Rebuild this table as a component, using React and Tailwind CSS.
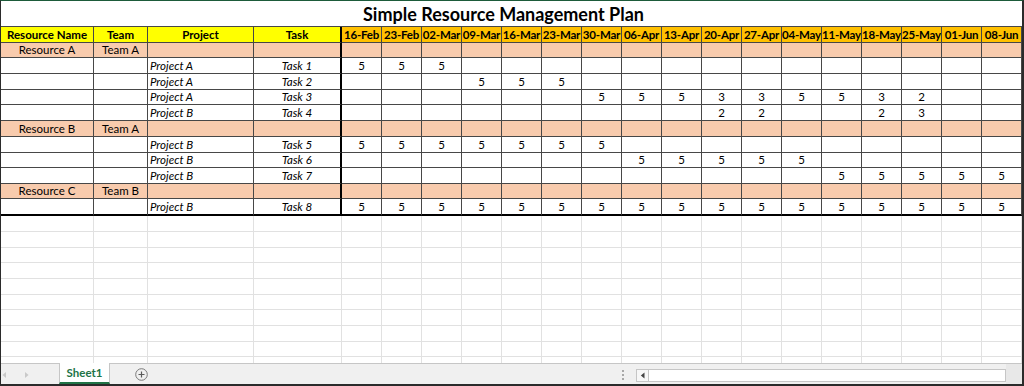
import React from "react";

const DATES = [
  "16-Feb", "23-Feb", "02-Mar", "09-Mar", "16-Mar", "23-Mar", "30-Mar", "06-Apr", "13-Apr",
  "20-Apr", "27-Apr", "04-May", "11-May", "18-May", "25-May", "01-Jun", "08-Jun",
];

// row kind: "group" = peach resource row, "task" = plain row with hours per week
const ROWS = [
  { kind: "group", name: "Resource A", team: "Team A", h: "h-[15px]" },
  { kind: "task", project: "Project A", task: "Task 1", hours: { 0: 5, 1: 5, 2: 5 }, h: "h-[16px]" },
  { kind: "task", project: "Project A", task: "Task 2", hours: { 3: 5, 4: 5, 5: 5 }, h: "h-[16px]" },
  { kind: "task", project: "Project A", task: "Task 3", hours: { 6: 5, 7: 5, 8: 5, 9: 3, 10: 3, 11: 5, 12: 5, 13: 3, 14: 2 }, h: "h-[15px]" },
  { kind: "task", project: "Project B", task: "Task 4", hours: { 9: 2, 10: 2, 13: 2, 14: 3 }, h: "h-[16px]" },
  { kind: "group", name: "Resource B", team: "Team A", h: "h-[16px]" },
  { kind: "task", project: "Project B", task: "Task 5", hours: { 0: 5, 1: 5, 2: 5, 3: 5, 4: 5, 5: 5, 6: 5 }, h: "h-[16px]" },
  { kind: "task", project: "Project B", task: "Task 6", hours: { 7: 5, 8: 5, 9: 5, 10: 5, 11: 5 }, h: "h-[15px]" },
  { kind: "task", project: "Project B", task: "Task 7", hours: { 12: 5, 13: 5, 14: 5, 15: 5, 16: 5 }, h: "h-[16px]" },
  { kind: "group", name: "Resource C", team: "Team B", h: "h-[15px]" },
  { kind: "task", project: "Project B", task: "Task 8", hours: Object.fromEntries(DATES.map((_, i) => [i, 5])), h: "h-[17px]", last: true },
];

const EMPTY_HEIGHTS = ["h-[16px]", "h-[16px]", "h-[15px]", "h-[16px]", "h-[16px]", "h-[15px]", "h-[16px]", "h-[16px]", "h-[15px]", "h-[16px]"];

const COLS = "grid grid-cols-[93px_54px_106px_88px_repeat(17,40px)]";

function Cell({ className = "", children, thick, last }) {
  return (
    <div
      className={`flex items-center overflow-hidden whitespace-nowrap border-b border-r border-[#474747] ${
        thick ? "border-r-2 border-r-black" : ""
      } ${last ? "border-b-2 border-b-black" : ""} ${className}`}
    >
      {children}
    </div>
  );
}

function HeaderRow() {
  return (
    <div className={`${COLS} h-[16px] font-bold`}>
      <Cell className="justify-center bg-[#ffff00] text-[11.5px]">Resource Name</Cell>
      <Cell className="justify-center bg-[#ffff00] text-[11.5px]">Team</Cell>
      <Cell className="justify-center bg-[#ffff00] text-[11.5px]">Project</Cell>
      <Cell className="justify-center bg-[#ffff00] text-[11.5px]" thick>Task</Cell>
      {DATES.map((d) => (
        <Cell key={d} className="justify-center bg-[#ffc000] tracking-[-0.2px]">
          {d}
        </Cell>
      ))}
    </div>
  );
}

function DataRow({ row }) {
  if (row.kind === "group") {
    return (
      <div className={`${COLS} ${row.h} bg-[#f8cbad]`}>
        <Cell className="justify-center">{row.name}</Cell>
        <Cell className="justify-center">{row.team}</Cell>
        <Cell />
        <Cell thick />
        {DATES.map((d) => (
          <Cell key={d} />
        ))}
      </div>
    );
  }
  return (
    <div className={`${COLS} ${row.h} bg-white`}>
      <Cell last={row.last} />
      <Cell last={row.last} />
      <Cell last={row.last} className="pl-[2px] italic">{row.project}</Cell>
      <Cell last={row.last} thick className="justify-center italic">{row.task}</Cell>
      {DATES.map((d, i) => (
        <Cell key={d} last={row.last} className="justify-center">
          {row.hours[i] ?? ""}
        </Cell>
      ))}
    </div>
  );
}

function EmptyRow({ h, noBottom }) {
  return (
    <div className={`${COLS} ${h}`}>
      {Array.from({ length: 21 }, (_, i) => (
        <div key={i} className={`border-r border-[#e1e1e1] ${noBottom ? "" : "border-b"}`} />
      ))}
    </div>
  );
}

function TabBar() {
  return (
    <div className="flex h-[21px] border-t border-[#c6c6c6] bg-[#f0f0f0]">
      <div className="flex w-[58px] items-center pt-[1px]">
        <svg width="58" height="10" viewBox="0 0 58 10">
          <path d="M5 2 L1.5 5 L5 8 Z" fill="#c9c9c9" />
          <path d="M24 2 L27.5 5 L24 8 Z" fill="#c9c9c9" />
        </svg>
      </div>
      <div className="-mt-[1px] flex w-[51px] items-center justify-center border-x border-[#c6c6c6] border-b-2 border-b-[#217346] bg-white text-[11.5px] font-bold text-[#217346]">
        Sheet1
      </div>
      <div className="w-[25px]" />
      <div className="flex w-[13px] items-center">
        <svg width="13" height="13" viewBox="0 0 13 13">
          <circle cx="6.5" cy="6.5" r="5.8" fill="none" stroke="#7a7a7a" strokeWidth="1" />
          <path d="M6.5 3.5 V9.5 M3.5 6.5 H9.5" stroke="#5a5a5a" strokeWidth="1.2" />
        </svg>
      </div>
      <div className="flex-1" />
      <div className="flex w-[10px] flex-col items-center justify-center gap-[2px] pt-[1px]">
        <span className="h-[2px] w-[2px] bg-[#a8a8a8]" />
        <span className="h-[2px] w-[2px] bg-[#a8a8a8]" />
        <span className="h-[2px] w-[2px] bg-[#a8a8a8]" />
      </div>
      <div className="w-[8px]" />
      <div className="mt-[5px] flex h-[13px] w-[370px] border border-[#c6c6c6] bg-white">
        <div className="flex w-[12px] items-center justify-center border-r border-[#c6c6c6] bg-[#f7f7f7]">
          <svg width="6" height="7" viewBox="0 0 6 7">
            <path d="M4.5 0.5 L0.8 3.5 L4.5 6.5 Z" fill="#444" />
          </svg>
        </div>
      </div>
      <div className="w-[16px] bg-[#e8e8e8]" />
    </div>
  );
}

export default function App() {
  return (
    <div
      className="h-[386px] w-[1024px] overflow-hidden border-b-2 border-l border-r-2 border-t border-b-[#2b2b2b] border-l-[#2b2b2b] border-r-[#2b2b2b] border-t-[#1d5b3a] bg-white text-[11.5px] leading-none text-black"
      style={{ fontFamily: "Lato, 'Open Sans', sans-serif" }}
    >
      <div className="h-[362px] overflow-hidden">
        <div className="flex h-[26px] items-center justify-center border-b border-[#474747] pr-[16px] text-[18px] font-bold">
          Simple Resource Management Plan
        </div>
        <HeaderRow />
        {ROWS.map((r, i) => (
          <DataRow key={i} row={r} />
        ))}
        {EMPTY_HEIGHTS.map((h, i) => (
          <EmptyRow key={i} h={h} noBottom={i === EMPTY_HEIGHTS.length - 1} />
        ))}
      </div>
      <TabBar />
    </div>
  );
}
